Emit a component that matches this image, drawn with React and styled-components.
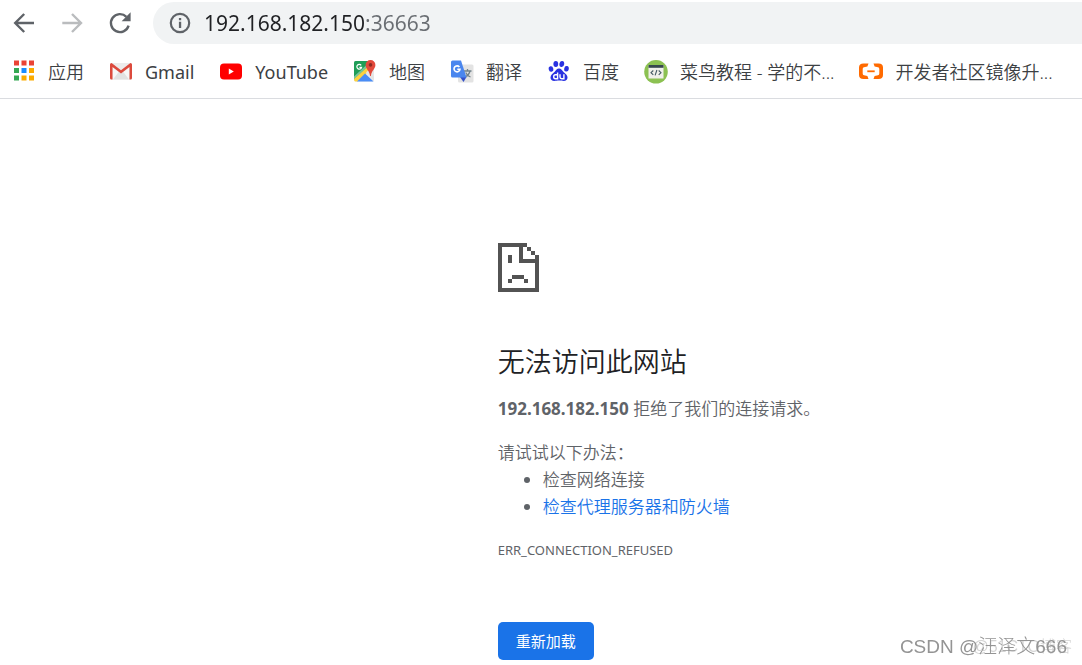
import React, { useState } from 'react'
import styled, { createGlobalStyle } from 'styled-components'

const GlobalStyle = createGlobalStyle`
  * {
    box-sizing: border-box;
  }
  body {
    margin: 0;
    background: #fff;
    font-family: "Noto Sans", "Noto Sans CJK SC", sans-serif;
    overflow-x: hidden;
  }
`

const Toolbar = styled.header`
  display: flex;
  align-items: center;
  height: 45px;
  padding-left: 12px;
`

const NavButton = styled.button`
  display: flex;
  width: 24px;
  height: 24px;
  margin-right: 24px;
  padding: 0;
  border: none;
  background: none;
  color: ${({ disabled }) => (disabled ? '#babcbe' : '#5f6368')};
`

const AddressBar = styled.label`
  display: flex;
  flex: 1;
  align-items: center;
  gap: 13px;
  height: 42px;
  margin-left: -3px;
  padding-left: 16px;
  border-radius: 21px 0 0 21px;
  background: #f1f3f4;
  color: #5f6368;
`

const AddressInput = styled.input`
  flex: 1;
  min-width: 0;
  padding: 0;
  border: none;
  outline: none;
  font-family: inherit;
  font-size: 21px;
  line-height: 30px;
  color: transparent;
  background: linear-gradient(90deg, #202124 162px, #6a6e73 162px);
  background-clip: text;
`

const BookmarkBar = styled.nav`
  display: flex;
  align-items: center;
  gap: 25px;
  height: 54px;
  padding: 0 12px;
  border-bottom: 1px solid #dadce0;
  overflow: hidden;
`

const Bookmark = styled.a`
  display: flex;
  flex-shrink: 0;
  align-items: center;
  gap: 12px;
  font-size: 18px;
  font-weight: ${({ $latin }) => ($latin ? 400 : 350)};
  line-height: 26px;
  color: #3c4043;
  text-decoration: none;
  white-space: nowrap;
`

const Main = styled.main`
  padding: 144px 24px 5px 46%;
  font-size: 17px;
  font-weight: 350;
  line-height: 27px;
  color: #5f6368;
`

const SadIcon = styled.svg`
  display: block;
  width: 41px;
  height: 49px;
  fill: #535353;
`

const Title = styled.h1`
  margin: 50px 0 13px;
  font-size: 27px;
  font-weight: 350;
  line-height: 40px;
  color: #202124;
`

const Text = styled.p`
  margin: 0 0 17px;

  strong {
    font-weight: 700;
  }
`

const SuggestionTitle = styled.p`
  margin: 0;
`

const Suggestions = styled.ul`
  margin: 0 0 17px;
  padding-left: 45px;
`

const SuggestionLink = styled.a`
  color: #1a73e8;
  text-decoration: none;
`

const ErrorCode = styled.div`
  font-size: 13px;
  font-weight: 400;
`

const ReloadButton = styled.button`
  height: 38px;
  margin-top: 58px;
  padding: 0 18px;
  border: none;
  border-radius: 5px;
  background: #1a73e8;
  color: #fff;
  font-family: inherit;
  font-size: 15px;
  font-weight: 400;
  line-height: 22px;
`

const Watermark = styled.div`
  position: fixed;
  right: ${({ $right }) => $right}px;
  bottom: 5px;
  font-family: "Liberation Sans", "Noto Sans CJK SC", sans-serif;
  font-size: ${({ $size }) => $size}px;
  font-weight: 300;
  line-height: 26px;
  color: ${({ $color }) => $color};
  white-space: nowrap;
  pointer-events: none;
`

const BackIcon = () => (
  <svg width="24" height="24" viewBox="0 0 24 24" fill="none" stroke="currentColor" strokeWidth="2.4">
    <path d="M22 12H3.800M12.200 3L3.200 12l9 9" />
  </svg>
)

const ForwardIcon = () => (
  <svg width="24" height="24" viewBox="0 0 24 24" fill="none" stroke="currentColor" strokeWidth="2.4">
    <path d="M2.300 12h18.100M12 3l9 9-9 9" />
  </svg>
)

const ReloadIcon = () => (
  <svg width="24" height="24" viewBox="0 0 24 24">
    <path d="M20.6 14.6A9 9 0 1 1 18.4 5.8" fill="none" stroke="currentColor" strokeWidth="2.4" />
    <path d="M22.6 1.2v9h-9z" fill="currentColor" />
  </svg>
)

const InfoIcon = () => (
  <svg width="22" height="22" viewBox="0 0 22 22">
    <circle cx="11" cy="11" r="9.2" fill="none" stroke="currentColor" strokeWidth="2.2" />
    <path d="M9.9 9.8h2.3v6.2H9.9zM9.9 6h2.3v2.2H9.9z" fill="currentColor" />
  </svg>
)

const appColors = ['#ea4335', '#ea4335', '#ea4335', '#34a853', '#1a8cff', '#fbab00', '#34a853', '#fbab00', '#fbab00']

const AppsIcon = () => (
  <svg width="24" height="24" viewBox="0 0 24 24">
    {appColors.map((color, i) => (
      <rect key={i} x={2 + (i % 3) * 7.5} y={Math.floor(i / 3) * 7.5 + 0.5} width="5" height="5" fill={color} />
    ))}
  </svg>
)

const GmailIcon = () => (
  <svg width="24" height="24" viewBox="0 0 24 24">
    <rect x="1" y="3" width="22" height="16.5" rx="1.5" fill="#ececec" />
    <path d="M4 19.5V7l8 6 8-6v12.5z" fill="#f7f7f7" />
    <path d="M4 19.5l6-8 2 1.5 2-1.5 6 8z" fill="#e2e2e2" />
    <path d="M1 4.500Q1 3 2.600 3L12 10.300 21.400 3Q23 3 23 4.500V18q0 1.500-1.500 1.500H20.500V7L12 13.500 3.500 7v12.500H2.500Q1 19.500 1 18z" fill="#dc4a3d" />
  </svg>
)

const YouTubeIcon = () => (
  <svg width="24" height="24" viewBox="0 0 24 24">
    <rect x="1" y="3.500" width="22" height="16" rx="4" fill="#f00" />
    <path d="M9.800 8.500v6l5-3z" fill="#fff" />
  </svg>
)

const MapsIcon = () => (
  <svg width="24" height="24" viewBox="0 0 24 24">
    <rect x="1" y="1" width="20" height="20.500" rx="1.500" fill="#e8e8e8" />
    <path d="M2.500 1H16l2 5.500L1 20V2.500Q1 1 2.500 1z" fill="#1e9d57" />
    <path d="M1 19L15 6.500l3 2.500L4.500 21.500H2.500Q1 21.500 1 19z" fill="#fdd23f" />
    <path d="M1 16.600L13.500 5l1.500 1.500L1 19z" fill="#fff" opacity=".4" />
    <path d="M4 21.500l8-8 8.500 8z" fill="#4a8df6" />
    <path d="M13 12.500l2-2 6 6v4z" fill="#e4e4e4" />
    <path d="M8.200 5.300A2.400 2.400 0 1 0 8.600 7.300H6.400" fill="none" stroke="#fff" strokeWidth="1.200" />
    <path d="M17.500 0a4.900 4.900 0 0 1 4.900 4.900c0 4-3.900 5.300-4.500 11.100h-.8C16.500 10.200 12.600 8.900 12.600 4.900A4.900 4.900 0 0 1 17.500 0z" fill="#e2493b" />
    <circle cx="17.500" cy="4.900" r="1.800" fill="#8c2a22" />
  </svg>
)

const TranslateIcon = () => (
  <svg width="24" height="24" viewBox="0 0 24 24">
    <rect x="8" y="4.500" width="15.500" height="18" rx="1.500" fill="#e3e3e3" />
    <path d="M13.500 11h8M17.500 9v2M20 11c-.7 3-2.700 5-5 6M15.700 12.500c1 2.200 2.500 3.600 4.800 4.500" fill="none" stroke="#71828b" strokeWidth="1.300" />
    <path d="M10 17h6.500L13.500 22z" fill="#3450c8" />
    <path d="M2.500.5H11l5.500 17h-14Q1 17.500 1 16V2Q1 .5 2.500.5z" fill="#4a86ee" />
    <path d="M9.400 7A3 3 0 1 0 10 9.200H7.300" fill="none" stroke="#fff" strokeWidth="1.600" />
  </svg>
)

const BaiduIcon = () => (
  <svg width="24" height="24" viewBox="0 0 24 24" fill="#2932e1">
    <ellipse cx="4" cy="9" rx="2.300" ry="2.800" transform="rotate(-12 4 9)" />
    <ellipse cx="8.800" cy="4" rx="2.400" ry="3" />
    <ellipse cx="14.800" cy="4" rx="2.400" ry="3" transform="rotate(8 14.800 4)" />
    <ellipse cx="19.500" cy="8.800" rx="2.300" ry="2.800" transform="rotate(10 19.500 8.800)" />
    <path d="M12 8.500c2.200 0 2.800 1.600 4.300 3.200 1.800 2 4.200 3 4.200 5.800 0 2.200-1.600 3.500-3.700 3.500-1.900 0-2.900-.4-4.800-.4s-2.900.4-4.800.4c-2.100 0-3.700-1.300-3.700-3.500 0-2.800 2.400-3.800 4.200-5.800C9.200 10.100 9.800 8.500 12 8.500z" />
    <path d="M10.600 12.500v6.200H8.400q-1.700 0-1.700-2t1.700-2h2.200M13 14.200v2.800q0 1.700 1.700 1.700h2.200V14.200" fill="none" stroke="#fff" strokeWidth="1.400" />
  </svg>
)

const RunoobIcon = () => (
  <svg width="24" height="24" viewBox="0 0 24 24">
    <circle cx="12" cy="11.800" r="11.800" fill="#8cc152" />
    <rect x="4.500" y="5" width="15" height="13.500" fill="#f0f0ea" />
    <path d="M4.500 5h15v2.800h-15z" fill="#37474f" />
    <path d="M9.300 10.500L7 12.700l2.300 2.200M14.700 10.500l2.300 2.200-2.300 2.200M12.900 10l-1.800 5.400" fill="none" stroke="#455a64" strokeWidth="1.100" />
  </svg>
)

const AliyunIcon = () => (
  <svg width="24" height="24" viewBox="0 0 24 24" fill="#ff6a00">
    <path d="M9.500 3.500H4.500Q0 3.500 0 7.500v7.500q0 4 4.500 4h5L8.400 16 5 15.300Q3.700 15 3.700 13.500v-4.500Q3.700 7.500 5 7.200L8.400 6.500zM14.500 3.500h5Q24 3.500 24 7.500v7.500q0 4-4.500 4h-5l1.100-3 3.400-.7q1.300-.3 1.300-1.800v-4.500Q20.300 7.500 19 7.200L15.600 6.500z" />
    <path d="M8.300 10.400h7.400v1.800H8.300z" />
  </svg>
)

const bookmarks = [
  { name: '应用', Icon: AppsIcon },
  { name: 'Gmail', Icon: GmailIcon, latin: true },
  { name: 'YouTube', Icon: YouTubeIcon, latin: true },
  { name: '地图', Icon: MapsIcon },
  { name: '翻译', Icon: TranslateIcon },
  { name: '百度', Icon: BaiduIcon },
  { name: '菜鸟教程 - 学的不...', Icon: RunoobIcon },
  { name: '开发者社区镜像升...', Icon: AliyunIcon },
]

export default function App() {
  const [url, setUrl] = useState('192.168.182.150:36663')

  const onChangeUrl = (event) => {
    setUrl(event.target.value)
  }

  return (
    <div lang="zh-CN">
      <GlobalStyle />
      <Toolbar>
        <NavButton aria-label="后退"><BackIcon /></NavButton>
        <NavButton aria-label="前进" disabled><ForwardIcon /></NavButton>
        <NavButton aria-label="刷新"><ReloadIcon /></NavButton>
        <AddressBar>
          <InfoIcon />
          <AddressInput type="text" aria-label="地址" value={url} onChange={onChangeUrl} spellCheck={false} />
        </AddressBar>
      </Toolbar>
      <BookmarkBar>
        {bookmarks.map(({ name, Icon, latin }) => (
          <Bookmark key={name} href="#" $latin={latin}>
            <Icon />
            {name}
          </Bookmark>
        ))}
      </BookmarkBar>
      <Main>
        <SadIcon viewBox="0 0 41 49" shapeRendering="crispEdges" aria-hidden="true">
          <path d="M0 0h29v4H4v41h33V12h4v37H0z" />
          <path d="M29 4h4v4h-4zM33 8h4v4h-4zM21 4h4v12h12v4H21z" />
          <path d="M10 12h4v8h-4zM14 32h12v4H14zM10 36h4v4h-4zM26 36h4v4h-4z" />
        </SadIcon>
        <Title>无法访问此网站</Title>
        <Text><strong>192.168.182.150</strong> 拒绝了我们的连接请求。</Text>
        <SuggestionTitle>请试试以下办法：</SuggestionTitle>
        <Suggestions>
          <li>检查网络连接</li>
          <li><SuggestionLink href="#">检查代理服务器和防火墙</SuggestionLink></li>
        </Suggestions>
        <ErrorCode>ERR_CONNECTION_REFUSED</ErrorCode>
        <ReloadButton>重新加载</ReloadButton>
      </Main>
      <Watermark $right={10} $size={16} $color="#d4d4d4">@51CTO博客</Watermark>
      <Watermark $right={15} $size={19} $color="#949494">CSDN @汪泽文666</Watermark>
    </div>
  )
}
